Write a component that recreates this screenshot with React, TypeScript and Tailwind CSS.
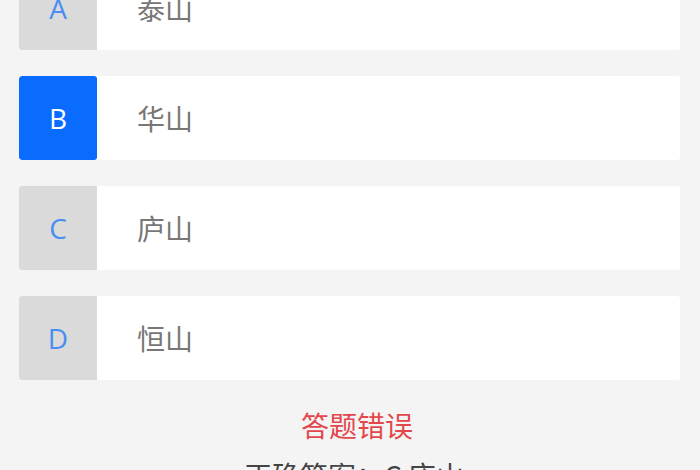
import React from "react";

const options = [
  { key: "A", text: "泰山", selected: false },
  { key: "B", text: "华山", selected: true },
  { key: "C", text: "庐山", selected: false },
  { key: "D", text: "恒山", selected: false },
];

export default function App() {
  return (
    <div
      className="w-[700px] h-[470px] overflow-hidden bg-[#f4f4f4]"
      style={{ fontFamily: '"Noto Sans CJK SC", "Noto Sans", sans-serif' }}
    >
      <div className="-mt-[34px] flex flex-col">
        <div className="flex flex-col gap-[26px] pl-[19px] pr-[20px]">
          {options.map((o) => (
            <div
              key={o.key}
              className="h-[84px] flex items-stretch bg-white rounded-[3px] overflow-hidden"
            >
              <div
                className={
                  o.selected
                    ? "w-[78px] flex items-center justify-center bg-[#0a6cff] text-white text-[28px] rounded-[3px]"
                    : "w-[78px] flex items-center justify-center bg-[#dadada] text-[#4a8ef2] text-[28px]"
                }
                style={{ fontFamily: '"Open Sans", "Liberation Sans", sans-serif' }}
              >
                {o.key}
              </div>
              <div className="flex items-center pl-[40px] text-[28px] text-[#777777] leading-none">
                {o.text}
              </div>
            </div>
          ))}
        </div>
        <div className="mt-[31px] h-[28px] leading-[28px] text-[28px] text-center text-[#e2474c] pl-[14px]">
          答题错误
        </div>
        <div className="mt-[22px] h-[28px] leading-[28px] text-[28px] text-center text-[#444444] pl-[8px]">
          正确答案：C 庐山
        </div>
      </div>
    </div>
  );
}
